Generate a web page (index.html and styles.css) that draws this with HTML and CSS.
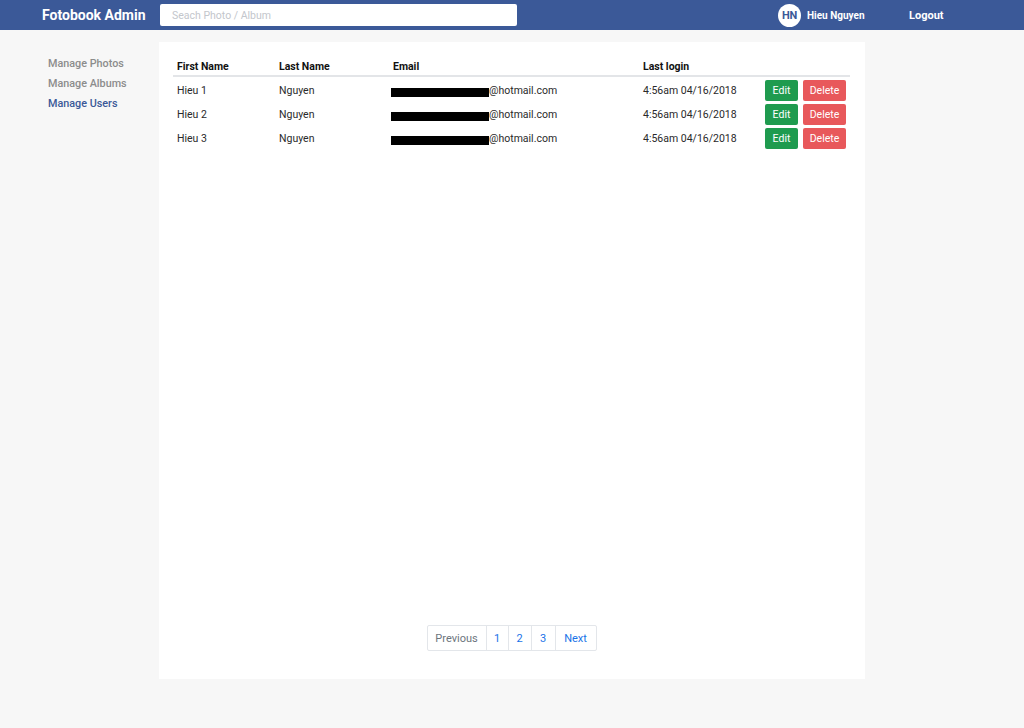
FILE: index.html
```
<!DOCTYPE html>
<html lang="en">
<head>
<meta charset="utf-8">
<title>Fotobook Admin</title>
<link rel="stylesheet" href="styles.css">
</head>
<body>
<header class="navbar">
  <div class="brand">Fotobook Admin</div>
  <input class="search" type="text" placeholder="Seach Photo / Album">
  <div class="user">
    <span class="avatar">HN</span>
    <span class="user-name">Hieu Nguyen</span>
  </div>
  <div class="logout">Logout</div>
</header>
<div class="layout">
  <nav class="sidebar">
    <a class="side-link">Manage Photos</a>
    <a class="side-link">Manage Albums</a>
    <a class="side-link active">Manage Users</a>
  </nav>
  <main class="card">
    <table class="users">
      <thead>
        <tr>
          <th class="c-first">First Name</th>
          <th class="c-last">Last Name</th>
          <th class="c-email">Email</th>
          <th class="c-login">Last login</th>
          <th class="c-actions"></th>
        </tr>
      </thead>
      <tbody>
        <tr>
          <td>Hieu 1</td>
          <td>Nguyen</td>
          <td class="email"><span class="redact"></span>@hotmail.com</td>
          <td>4:56am 04/16/2018</td>
          <td class="actions"><button class="btn btn-edit">Edit</button><button class="btn btn-delete">Delete</button></td>
        </tr>
        <tr>
          <td>Hieu 2</td>
          <td>Nguyen</td>
          <td class="email"><span class="redact"></span>@hotmail.com</td>
          <td>4:56am 04/16/2018</td>
          <td class="actions"><button class="btn btn-edit">Edit</button><button class="btn btn-delete">Delete</button></td>
        </tr>
        <tr>
          <td>Hieu 3</td>
          <td>Nguyen</td>
          <td class="email"><span class="redact"></span>@hotmail.com</td>
          <td>4:56am 04/16/2018</td>
          <td class="actions"><button class="btn btn-edit">Edit</button><button class="btn btn-delete">Delete</button></td>
        </tr>
      </tbody>
    </table>
    <ul class="pagination">
      <li class="page prev">Previous</li>
      <li class="page p1">1</li>
      <li class="page p2">2</li>
      <li class="page p3">3</li>
      <li class="page next">Next</li>
    </ul>
  </main>
</div>
</body>
</html>
```
FILE: styles.css
```
* { box-sizing: border-box; }
html, body {
  margin: 0;
  padding: 0;
  background: #f7f7f7;
  font-family: Roboto, "Liberation Sans", Arial, sans-serif;
  color: #212529;
  height: 100%;
}
.navbar {
  display: flex;
  align-items: center;
  height: 30px;
  background: #3b5998;
  color: #fff;
}
.brand {
  width: 160px;
  padding-left: 42px;
  font-size: 14px;
  font-weight: 700;
  white-space: nowrap;
}
.search {
  width: 357px;
  height: 22px;
  border: 0;
  border-radius: 2px;
  background: #fff;
  padding: 0 12px;
  font-family: inherit;
  font-size: 10.5px;
  outline: none;
}
.search::placeholder { color: #c3c6cc; }
.user {
  margin-left: auto;
  width: 131px;
  display: flex;
  align-items: center;
  gap: 6px;
}
.avatar {
  width: 23px;
  height: 23px;
  border-radius: 50%;
  background: #fff;
  color: #3b5998;
  font-size: 11px;
  font-weight: 700;
  display: flex;
  align-items: center;
  justify-content: center;
  letter-spacing: -0.3px;
}
.user-name {
  font-size: 10px;
  font-weight: 700;
}
.logout {
  width: 115px;
  font-size: 11px;
  font-weight: 700;
}
.layout {
  display: flex;
  padding-top: 12px;
}
.sidebar {
  width: 159px;
  padding: 12px 0 0 48px;
  display: flex;
  flex-direction: column;
}
.side-link {
  line-height: 20px;
  font-size: 10.8px;
  font-weight: 500;
  color: #8c8c8c;
  white-space: nowrap;
}
.side-link.active { color: #3b5998; }
.card {
  width: 706px;
  height: 637px;
  background: #fff;
  padding: 16px 15px 28px 14px;
  display: flex;
  flex-direction: column;
}
.users {
  width: 677px;
  border-collapse: collapse;
  font-size: 10.5px;
}
.users th {
  text-align: left;
  font-weight: 700;
  height: 18px;
  padding: 0 4px;
  vertical-align: middle;
  border-bottom: 2px solid #e3e5e8;
  color: #111;
}
.c-first { width: 102px; }
.c-last { width: 114px; }
.c-email { width: 250px; }
.c-login { width: 122px; }
.users td {
  height: 24px;
  padding: 0 4px;
  vertical-align: middle;
  white-space: nowrap;
  color: #2a2a2a;
}
.users tbody tr:first-child td {
  height: 25px;
  padding-top: 1px;
}
.users td.email { padding-left: 2px; }
.redact {
  display: inline-block;
  width: 98px;
  height: 9px;
  background: #000;
  vertical-align: -3px;
}
.actions {
  display: flex;
  gap: 5px;
  align-items: center;
}
.users td.actions { height: 24px; }
.btn {
  height: 21px;
  border: 0;
  border-radius: 2px;
  color: #fff;
  font-family: inherit;
  font-size: 10.5px;
  padding: 0;
  cursor: pointer;
}
.btn-edit { width: 33px; background: #1f9b4f; }
.btn-delete { width: 43px; background: #e8585b; }
.pagination {
  list-style: none;
  margin: auto 0 0;
  padding: 0;
  align-self: center;
  display: flex;
  font-size: 11px;
}
.page {
  height: 26px;
  display: flex;
  align-items: center;
  justify-content: center;
  border: 1px solid #e3e6ea;
  margin-left: -1px;
  color: #1a73e8;
}
.prev {
  width: 60px;
  margin-left: 0;
  color: #6c757d;
  border-radius: 2px 0 0 2px;
}
.p1 { width: 23px; }
.p2 { width: 24px; }
.p3 { width: 25px; }
.next { width: 42px; border-radius: 0 2px 2px 0; }
```
